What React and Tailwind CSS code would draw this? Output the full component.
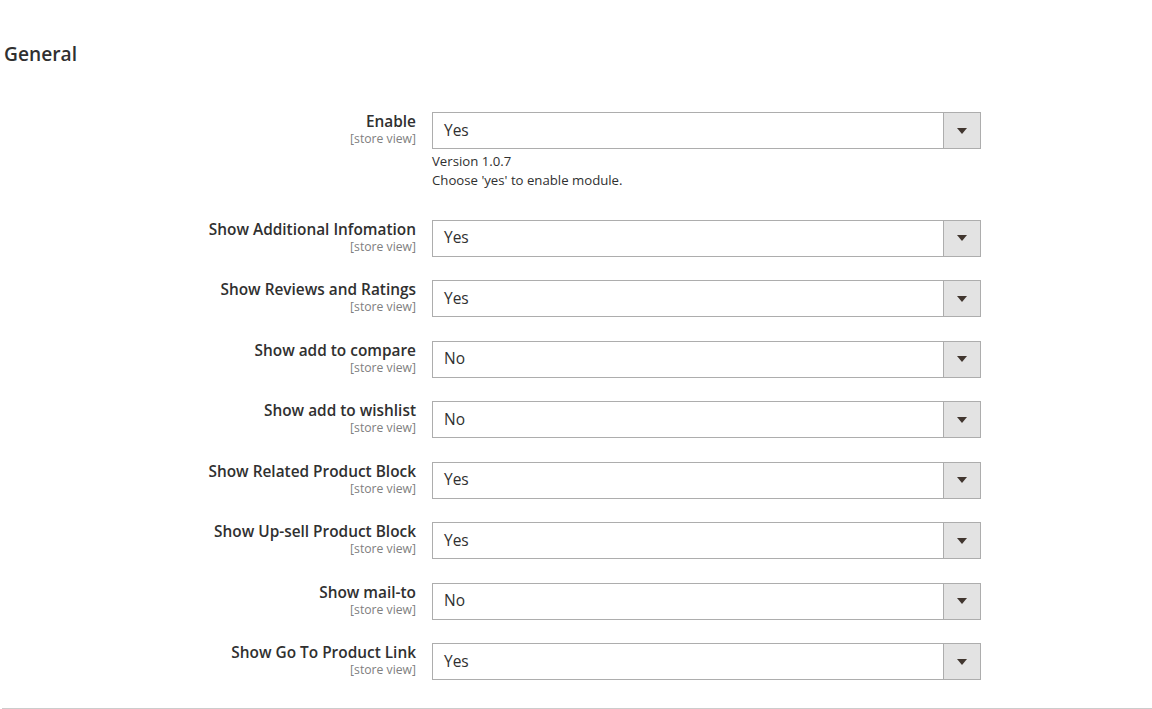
import React from 'react';

const rows = [
  { label: 'Enable', value: 'Yes', note: ['Version 1.0.7', "Choose 'yes' to enable module."] },
  { label: 'Show Additional Infomation', value: 'Yes' },
  { label: 'Show Reviews and Ratings', value: 'Yes' },
  { label: 'Show add to compare', value: 'No' },
  { label: 'Show add to wishlist', value: 'No' },
  { label: 'Show Related Product Block', value: 'Yes' },
  { label: 'Show Up-sell Product Block', value: 'Yes' },
  { label: 'Show mail-to', value: 'No' },
  { label: 'Show Go To Product Link', value: 'Yes' },
];

const Select = ({ value }) => (
  <div className="flex h-[37px] w-[549px] border border-[#adadad] bg-white">
    <div className="flex flex-1 items-center pl-[11px] text-[15.5px] text-[#303030]">{value}</div>
    <div className="flex w-[37px] items-center justify-center border-l border-[#adadad] bg-[#e3e3e3]">
      <div className="h-0 w-0 border-x-[5px] border-t-[6px] border-x-transparent border-t-[#41362f]" />
    </div>
  </div>
);

export default function App() {
  return (
    <div className="h-[709px] overflow-hidden bg-white font-['Open_Sans',sans-serif] text-[#303030]">
      <h2 className="pl-[4px] pt-[41px] text-[19.2px] font-semibold leading-[26px] text-[#303030]">General</h2>
      <div className="mt-[45px] flex flex-col">
        {rows.map((r, i) => (
          <div key={i} className="flex gap-4 pb-[23.5px]">
            <div className="w-[416px] text-right">
              <div className="mt-[1px] text-[15.4px] font-semibold leading-[17px]">{r.label}</div>
              <div className="text-[12.2px] leading-[17px] text-[#808080]">[store view]</div>
            </div>
            <div>
              <Select value={r.value} />
              {r.note && (
                <div className="mt-[3px] pb-[6px] text-[13.2px] leading-[19px]">
                  {r.note.map((n, j) => (
                    <div key={j}>{n}</div>
                  ))}
                </div>
              )}
            </div>
          </div>
        ))}
      </div>
      <div className="ml-[2px] mt-[4px] border-t border-[#cccccc]" />
    </div>
  );
}
